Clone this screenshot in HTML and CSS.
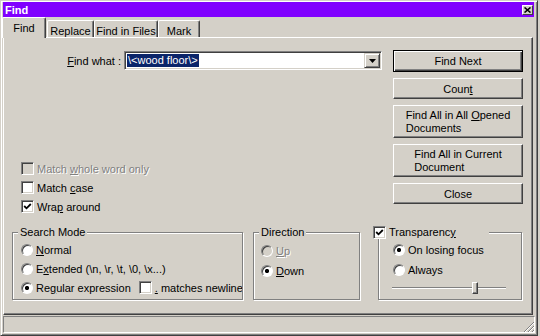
FILE: index.html
```html
<!DOCTYPE html>
<html>

<head>
    <meta charset="utf-8">
    <title>Find</title>
    <link rel="stylesheet" href="styles.css">
</head>

<body>
    <div class="window">
        <!-- TITLE BAR -->
        <header class="title-bar">
            <span class="title">Find</span>
            <span class="close-btn">
                <svg width="7" height="6" viewBox="0 0 7 6"><path d="M0.5 0.5 L6.5 5.5 M6.5 0.5 L0.5 5.5" stroke="#000" stroke-width="1.6" /></svg>
            </span>
        </header>

        <!-- TABS -->
        <div class="tabs">
            <div class="tab tab-active tab-find">Find</div>
            <div class="tab tab-replace">Replace</div>
            <div class="tab tab-files">Find in Files</div>
            <div class="tab tab-mark">Mark</div>
        </div>

        <section class="panel">
            <div class="panel-top">
                <div class="find-col">
                    <div class="find-row">
                        <label class="find-label"><u>F</u>ind what :</label>
                        <div class="combo">
                            <span class="combo-text">\&lt;wood floor\&gt;</span>
                            <span class="combo-btn">
                                <svg width="7" height="4" viewBox="0 0 7 4"><path d="M0 0 H7 L3.5 4 Z" fill="#000" /></svg>
                            </span>
                        </div>
                    </div>

                    <!-- OPTIONS -->
                    <div class="options">
                        <div class="opt-row disabled"><span class="check check-disabled"></span><span>Match <u>w</u>hole word only</span></div>
                        <div class="opt-row"><span class="check"></span><span>Match <u>c</u>ase</span></div>
                        <div class="opt-row">
                            <span class="check"><svg width="9" height="9" viewBox="0 0 9 9"><polyline points="1.2,4 3.5,6.3 7.8,2" fill="none" stroke="#000" stroke-width="1.8" /></svg></span><span>Wra<u>p</u> around</span>
                        </div>
                    </div>
                </div>

                <!-- BUTTONS -->
                <div class="btn-col">
                    <div class="btn btn-default">Find Next</div>
                    <div class="btn"><span>Coun<u>t</u></span></div>
                    <div class="btn btn-tall"><span>Find All in All <u>O</u>pened<br>Documents</span></div>
                    <div class="btn btn-tall"><span>Find All in Current<br>Document</span></div>
                    <div class="btn">Close</div>
                </div>
            </div>

            <!-- GROUPS -->
            <div class="groups">
                <fieldset class="group group-mode">
                    <legend>Search Mode</legend>
                    <div class="group-body">
                        <div class="opt-row"><span class="radio"></span><span><u>N</u>ormal</span></div>
                        <div class="opt-row"><span class="radio"></span><span>E<u>x</u>tended (\n, \r, \t, \0, \x...)</span></div>
                        <div class="opt-row">
                            <span class="radio radio-on"></span><span>Re<u>g</u>ular expression</span>
                            <span class="check check-newline"></span><span><u>.</u> matches newline</span>
                        </div>
                    </div>
                </fieldset>

                <fieldset class="group group-dir">
                    <legend>Direction</legend>
                    <div class="group-body">
                        <div class="opt-row disabled"><span class="radio radio-disabled"></span><span><u>U</u>p</span></div>
                        <div class="opt-row"><span class="radio radio-on"></span><span><u>D</u>own</span></div>
                    </div>
                </fieldset>

                <fieldset class="group group-trans">
                    <legend>
                        <span class="check"><svg width="9" height="9" viewBox="0 0 9 9"><polyline points="1.2,4 3.5,6.3 7.8,2" fill="none" stroke="#000" stroke-width="1.8" /></svg></span><span>Transparenc<u>y</u></span>
                    </legend>
                    <div class="group-body">
                        <div class="opt-row"><span class="radio radio-on"></span><span>On losing focus</span></div>
                        <div class="opt-row"><span class="radio"></span><span>Always</span></div>
                        <div class="slider"><span class="thumb"></span></div>
                    </div>
                </fieldset>
            </div>
        </section>

        <!-- STATUS BAR -->
        <footer class="status-bar">
            <svg class="grip" width="11" height="11" viewBox="0 0 11 11">
                <path d="M11 1 L1 11 M11 5 L5 11 M11 9 L9 11" stroke="#808080" stroke-width="1" />
                <path d="M11 2 L2 11 M11 6 L6 11 M11 10 L10 11" stroke="#fff" stroke-width="1" />
            </svg>
        </footer>
    </div>
</body>

</html>
```

FILE: styles.css
```css
body {
    margin: 0;
    background-color: #d4d0c8;
    font-family: "Liberation Sans", Arial, sans-serif;
    font-size: 11px;
    color: #000;
}

.window {
    width: 538px;
    height: 336px;
    box-sizing: border-box;
    display: flex;
    flex-direction: column;
    padding: 1px 4px 2px 2px;
    background-color: #d4d0c8;
    border: 1px solid;
    border-color: #d4d0c8 #404040 #404040 #d4d0c8;
    box-shadow: inset 1px 1px #fff, inset -1px -1px #808080;
}

/* TITLE BAR */
.title-bar {
    height: 15px;
    display: flex;
    align-items: center;
    justify-content: space-between;
    margin-right: -1px;
    padding: 0 1px 0 2px;
    background-color: #8000ff;
}

.title {
    color: #fff;
    font-weight: bold;
}

.close-btn {
    width: 11px;
    height: 10px;
    box-sizing: border-box;
    display: flex;
    align-items: center;
    justify-content: center;
    background-color: #d4d0c8;
    border: 1px solid;
    border-color: #fff #404040 #404040 #fff;
}

/* TABS */
.tabs {
    height: 20px;
    display: flex;
    align-items: flex-end;
}

.tab {
    height: 17px;
    box-sizing: border-box;
    padding-top: 4px;
    line-height: 13px;
    text-align: center;
    border-top: 1px solid #fff;
    border-left: 1px solid #fff;
    border-right: 1px solid #404040;
    border-radius: 2px 2px 0 0;
    box-shadow: inset -1px 0 #808080;
}

.tab-active {
    position: relative;
    height: 21px;
    margin-bottom: -1px;
    margin-left: -1px;
    padding-top: 4px;
    background-color: #d4d0c8;
}

.tab-find {
    width: 44px;
}

.tab-replace {
    width: 47px;
    margin-left: 1px;
}

.tab-files {
    width: 64px;
}

.tab-mark {
    width: 42px;
}

/* PANEL */
.panel {
    flex: 1;
    margin-bottom: 1px;
    padding: 12px 0 0 8px;
    border: 1px solid;
    border-color: #fff #404040 #404040 #fff;
    box-shadow: inset -1px -1px #808080;
}

.panel-top {
    display: grid;
    grid-template-columns: 370px 130px;
    column-gap: 11px;
}

.find-row {
    margin-top: 1px;
    display: grid;
    grid-template-columns: 109px 258px;
    column-gap: 3px;
    align-items: center;
}

.find-label {
    text-align: right;
}

.combo {
    height: 19px;
    box-sizing: border-box;
    display: flex;
    align-items: center;
    padding-left: 2px;
    background-color: #fff;
    border: 1px solid;
    border-color: #808080 #fff #fff #808080;
    box-shadow: inset 1px 1px #404040, inset -1px -1px #d4d0c8;
}

.combo-text {
    padding: 0 1px;
    line-height: 13px;
    color: #fff;
    background-color: #0a246a;
}

.combo-btn {
    width: 16px;
    height: 15px;
    box-sizing: border-box;
    margin-left: auto;
    margin-right: 1px;
    display: flex;
    align-items: center;
    justify-content: center;
    background-color: #d4d0c8;
    border: 1px solid;
    border-color: #d4d0c8 #404040 #404040 #d4d0c8;
    box-shadow: inset 1px 1px #fff, inset -1px -1px #808080;
}

.options {
    margin-top: 89px;
    padding-left: 9px;
}

.opt-row {
    height: 19px;
    display: flex;
    align-items: center;
    white-space: nowrap;
}

.disabled {
    color: #808080;
    text-shadow: 1px 1px #fff;
}

.check {
    width: 13px;
    height: 13px;
    box-sizing: border-box;
    flex-shrink: 0;
    display: inline-flex;
    align-items: center;
    justify-content: center;
    margin-right: 3px;
    background-color: #fff;
    border: 1px solid;
    border-color: #808080 #fff #fff #808080;
    box-shadow: inset 1px 1px #404040, inset -1px -1px #d4d0c8;
}

.check-disabled {
    background-color: #d4d0c8;
}

.check-newline {
    margin-left: 8px;
}

.radio {
    width: 12px;
    height: 12px;
    box-sizing: border-box;
    flex-shrink: 0;
    margin-right: 3px;
    border-radius: 50%;
    background-color: #fff;
    border: 1px solid;
    border-color: #808080 #fff #fff #808080;
    box-shadow: inset 1px 1px #404040;
}

.radio-on {
    background: radial-gradient(circle, #000 1.8px, #fff 2.4px);
}

.radio-disabled {
    background-color: #d4d0c8;
}

/* BUTTONS */
.btn-col {
    display: flex;
    flex-direction: column;
    gap: 6px;
}

.btn {
    height: 21px;
    box-sizing: border-box;
    display: flex;
    align-items: center;
    justify-content: center;
    border: 1px solid;
    border-color: #fff #404040 #404040 #fff;
    box-shadow: inset -1px -1px #808080;
}

.btn-default {
    height: 22px;
    border-color: #000;
    box-shadow: inset 1px 1px #fff, inset -1px -1px #404040, inset -2px -2px #808080;
}

.btn-tall {
    height: 33px;
}

.btn-tall span {
    line-height: 13px;
    text-align: left;
}

/* GROUPS */
.groups {
    display: flex;
    margin-top: 10px;
}

.group {
    height: 74px;
    box-sizing: border-box;
    margin: 0;
    padding: 0;
    min-width: 0;
    overflow: hidden;
    border: 1px solid #808080;
    box-shadow: inset 1px 1px #fff, 1px 1px #fff;
}

.group legend {
    margin-left: 5px;
    padding: 0 2px;
    line-height: 13px;
    background-color: #d4d0c8;
}

.group-body {
    padding-top: 1px;
}

.group-mode {
    width: 231px;
}

.group-mode .group-body {
    padding-left: 8px;
}

.group-dir {
    width: 107px;
    margin-left: 10px;
}

.group-dir .group-body {
    padding: 2px 0 0 7px;
}

.group-dir .opt-row {
    height: 20px;
}

.group-trans {
    width: 144px;
    margin-left: 18px;
}

.group-trans legend {
    width: 116px;
    box-sizing: border-box;
    margin-left: -6px;
    padding: 0;
    display: flex;
    align-items: center;
}

.group-trans .group-body {
    padding: 1px 0 0 14px;
}

.group-trans .opt-row {
    height: 20px;
}

.slider {
    width: 114px;
    height: 12px;
    margin: 2px 0 0 -1px;
    padding-left: 80px;
    box-sizing: border-box;
    background: linear-gradient(to bottom, transparent 5px, #808080 5px, #808080 6px, #fff 6px, #fff 7px, transparent 7px);
}

.thumb {
    display: block;
    width: 6px;
    height: 12px;
    box-sizing: border-box;
    background-color: #d4d0c8;
    border: 1px solid;
    border-color: #fff #404040 #404040 #fff;
    box-shadow: inset -1px -1px #808080;
}

/* STATUS BAR */
.status-bar {
    height: 17px;
    box-sizing: border-box;
    margin-right: -2px;
    display: flex;
    align-items: flex-end;
    justify-content: flex-end;
    border: 1px solid;
    border-color: #808080 #fff #fff #808080;
}
```
